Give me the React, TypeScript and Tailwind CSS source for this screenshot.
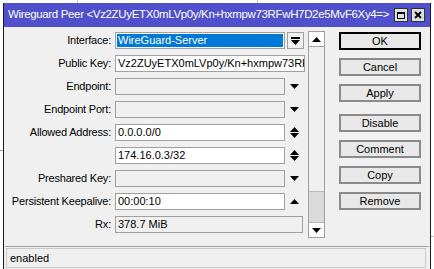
import React from "react";

const Down = () => (
  <svg width="9" height="5" viewBox="0 0 9 5"><path d="M0 0H9L4.5 5Z" fill="#000" /></svg>
);
const Up = () => (
  <svg width="9" height="5" viewBox="0 0 9 5"><path d="M0 5H9L4.5 0Z" fill="#000" /></svg>
);
const UpDown = () => (
  <svg width="9" height="11" viewBox="0 0 9 11">
    <path d="M0 5H9L4.5 0Z" fill="#000" />
    <path d="M0 6H9L4.5 11Z" fill="#000" />
  </svg>
);

const Label = ({ children }: { children?: React.ReactNode }) => (
  <div className="w-[107px] shrink-0 text-right whitespace-nowrap tracking-[-0.2px]">{children}</div>
);

const Field = ({
  text,
  disabled,
  w,
}: {
  text?: string;
  disabled?: boolean;
  w: string;
}) => (
  <div
    className={`${w} h-[17px] border border-[#a0a0a0] ${disabled ? "bg-[#f0f0f0]" : "bg-white"} pl-[2px] leading-[15px] whitespace-nowrap overflow-hidden text-[#000]`}
  >
    {text}
  </div>
);

const Row = ({ children }: { children: React.ReactNode }) => (
  <div className="flex items-center h-[17px]">{children}</div>
);

const Btn = ({ children, def }: { children: React.ReactNode; def?: boolean }) => (
  <div
    className={`h-[18px] w-[82px] flex items-center justify-center bg-[#e8e8e8] ${def ? "border-2 border-[#000]" : "border-2 border-[#8a8a8a]"}`}
  >
    {children}
  </div>
);

export default function App() {
  return (
    <div
      className="relative w-[434px] h-[269px] bg-white overflow-hidden text-[11px] text-black"
      style={{ fontFamily: '"Liberation Sans", Arial, sans-serif' }}
    >
      {/* background bits */}
      <div className="absolute left-0 top-[150px] w-[3px] h-px bg-[#a0a0a0]" />
      <div className="absolute right-0 top-[236px] w-[3px] h-px bg-[#c0c0c0]" />
      <div className="absolute left-[77px] top-0 w-px h-[3px] bg-[#c8c8c8]" />
      <div className="absolute left-[257px] top-0 w-px h-[3px] bg-[#c8c8c8]" />

      {/* window */}
      <div className="absolute left-[3px] top-[3px] w-[428px] h-[270px] border-x border-[#1a1a1a] bg-[#f0f0f0] flex flex-col">
        {/* title bar */}
        <div className="h-[24px] bg-[#5050cc] flex items-center pl-[4px] pr-[4px] shrink-0">
          <div className="flex-1 text-white text-[11.5px] tracking-[-0.35px] whitespace-nowrap overflow-hidden">
            Wireguard Peer &lt;Vz2ZUyETX0mLVp0y/Kn+hxmpw73RFwH7D2e5MvF6Xy4=&gt;
          </div>
          <div className="flex gap-[3px] mr-[1px]">
            <div className="w-[14px] h-[14px] bg-[#e0e0e0] border border-[#333] flex items-center justify-center">
              <div className="w-[8px] h-[7px] border border-black border-t-2" />
            </div>
            <div className="w-[14px] h-[14px] bg-[#e0e0e0] border border-[#333] flex items-center justify-center">
              <svg width="8" height="8" viewBox="0 0 8 8">
                <path d="M1 1L7 7M7 1L1 7" stroke="#000" strokeWidth="2" />
              </svg>
            </div>
          </div>
        </div>

        {/* body */}
        <div className="flex pt-[5px] flex-1">
          {/* form */}
          <div className="flex flex-col gap-[6px] w-[301px]">
            <Row>
              <Label>Interface:</Label>
              <div className="ml-[4px] w-[170px] h-[17px] border border-[#a0a0a0] bg-white p-px">
                <div className="h-full bg-[#0078d7] text-white leading-[13px] pl-px">WireGuard-Server</div>
              </div>
              <div className="ml-[2px] w-[17px] h-[17px] border border-[#a0a0a0] bg-[#f0f0f0] flex flex-col items-center justify-center gap-[1px]">
                <div className="w-[9px] h-[2px] bg-black" />
                <Down />
              </div>
            </Row>
            <Row>
              <Label>Public Key:</Label>
              <div className="ml-[4px]">
                <Field w="w-[190px]" text="Vz2ZUyETX0mLVp0y/Kn+hxmpw73RFwH7D2e5MvF6Xy4=" />
              </div>
            </Row>
            <Row>
              <Label>Endpoint:</Label>
              <div className="ml-[4px]"><Field w="w-[170px]" disabled /></div>
              <div className="w-[19px] flex justify-center"><Down /></div>
            </Row>
            <Row>
              <Label>Endpoint Port:</Label>
              <div className="ml-[4px]"><Field w="w-[170px]" disabled /></div>
              <div className="w-[19px] flex justify-center"><Down /></div>
            </Row>
            <Row>
              <Label>Allowed Address:</Label>
              <div className="ml-[4px]"><Field w="w-[170px]" text="0.0.0.0/0" /></div>
              <div className="w-[19px] flex justify-center"><UpDown /></div>
            </Row>
            <Row>
              <Label></Label>
              <div className="ml-[4px]"><Field w="w-[170px]" text="174.16.0.3/32" /></div>
              <div className="w-[19px] flex justify-center"><UpDown /></div>
            </Row>
            <Row>
              <Label>Preshared Key:</Label>
              <div className="ml-[4px]"><Field w="w-[170px]" disabled /></div>
              <div className="w-[19px] flex justify-center"><Down /></div>
            </Row>
            <Row>
              <Label>Persistent Keepalive:</Label>
              <div className="ml-[4px]"><Field w="w-[170px]" text="00:00:10" /></div>
              <div className="w-[19px] flex justify-center"><Up /></div>
            </Row>
            <Row>
              <Label>Rx:</Label>
              <div className="ml-[4px]"><Field w="w-[188px]" text="378.7 MiB" disabled /></div>
            </Row>
          </div>

          {/* scrollbar */}
          <div className="ml-[3px] -mt-[1px] w-[17px] h-[207px] border border-[#a0a0a0] bg-[#f0f0f0] flex flex-col">
            <div className="h-[15px] border-b border-[#a0a0a0] flex items-center justify-center bg-white">
              <Up />
            </div>
            <div className="flex-1" />
            <div className="h-[32px] bg-[#dadada] border-y border-[#b8b8b8]" />
            <div className="h-[14px] flex items-center justify-center bg-white">
              <Down />
            </div>
          </div>

          {/* buttons */}
          <div className="ml-[14px] flex flex-col">
            <Btn def>OK</Btn>
            <div className="h-[8px]" />
            <Btn>Cancel</Btn>
            <div className="h-[8px]" />
            <Btn>Apply</Btn>
            <div className="h-[12px]" />
            <Btn>Disable</Btn>
            <div className="h-[8px]" />
            <Btn>Comment</Btn>
            <div className="h-[8px]" />
            <Btn>Copy</Btn>
            <div className="h-[8px]" />
            <Btn>Remove</Btn>
          </div>
        </div>

        {/* status */}
        <div className="absolute left-[1px] top-[243px] w-[424px] h-px bg-[#a0a0a0]" />
        <div className="absolute left-[2px] top-[245px] w-[420px] h-[20px] border border-[#c8c8c8] bg-[#f0f0f0] pl-[3px] leading-[18px]">
          enabled
        </div>
      </div>
    </div>
  );
}
